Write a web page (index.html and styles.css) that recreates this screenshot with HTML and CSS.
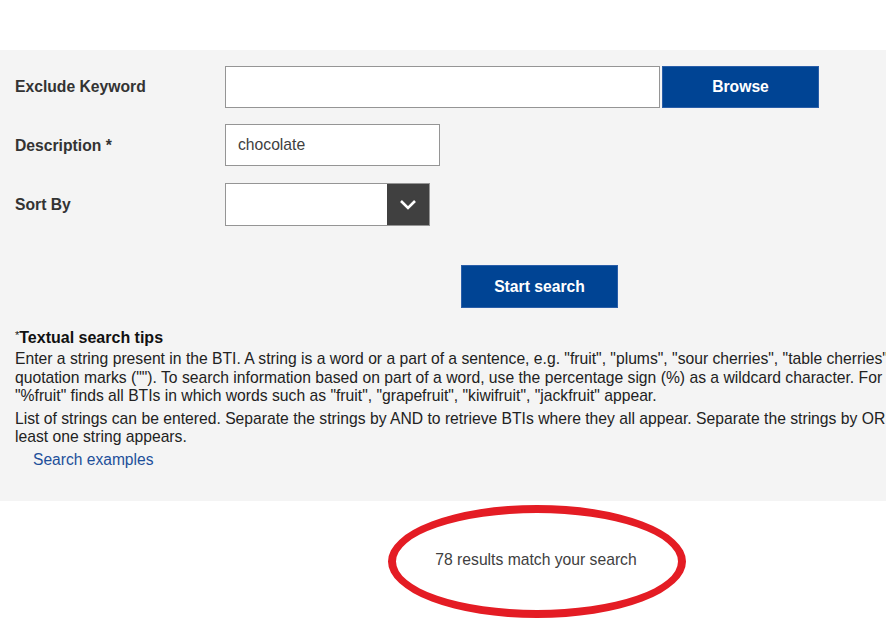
FILE: index.html
```html
<!DOCTYPE html>
<html>
<head>
<meta charset="utf-8">
<link rel="stylesheet" href="styles.css">
</head>
<body>
<div class="page">
  <div class="top-space"></div>
  <div class="panel">
    <div class="form-row">
      <label class="label">Exclude Keyword</label>
      <div class="field-group">
        <div class="input input-wide"></div>
        <button class="btn btn-browse">Browse</button>
      </div>
    </div>
    <div class="form-row">
      <label class="label">Description *</label>
      <div class="input input-desc">chocolate</div>
    </div>
    <div class="form-row">
      <label class="label">Sort By</label>
      <div class="select">
        <div class="select-value"></div>
        <div class="select-arrow">
          <svg width="18" height="12" viewBox="0 0 18 12"><path d="M2 2 L9 9 L16 2" fill="none" stroke="#fff" stroke-width="2.6"/></svg>
        </div>
      </div>
    </div>
    <div class="actions">
      <button class="btn btn-search">Start search</button>
    </div>
    <div class="tips">
      <h3 class="tips-title"><span class="star">*</span>Textual search tips</h3>
      <p class="tips-text">Enter a string present in the BTI. A string is a word or a part of a sentence, e.g. "fruit", "plums", "sour cherries", "table cherries" without quotation marks (""). To search information based on part of a word, use the percentage sign (%) as a wildcard character. For example, "%fruit" finds all BTIs in which words such as "fruit", "grapefruit", "kiwifruit", "jackfruit" appear.</p>
      <p class="tips-text tips-text-wide">List of strings can be entered. Separate the strings by AND to retrieve BTIs where they all appear. Separate the strings by OR to retrieve BTIs where at least one string appears.</p>
      <a class="tips-link" href="#">Search examples</a>
    </div>
  </div>
  <div class="results">78 results match your search</div>
  <div class="highlight"></div>
</div>
</body>
</html>
```
FILE: styles.css
```css
html {
  overflow: hidden;
}
html, body {
  margin: 0;
  padding: 0;
  background: #fff;
}
body {
  font-family: "Liberation Sans", Arial, sans-serif;
  color: #333;
}
.page {
  position: relative;
  width: 1072px;
  height: 641px;
  overflow: hidden;
}
.top-space {
  height: 50px;
}
.panel {
  background: #f4f4f4;
  height: 451px;
  box-sizing: border-box;
  padding: 16px 0 0 15px;
}
.form-row {
  display: grid;
  grid-template-columns: 210px auto;
  align-items: center;
  margin-bottom: 16px;
}
.label {
  font-size: 15.7px;
  font-weight: bold;
  color: #333;
}
.field-group {
  display: flex;
  gap: 2px;
}
.input {
  box-sizing: border-box;
  height: 42px;
  background: #fff;
  border: 1px solid #959595;
  font-size: 15.7px;
  color: #404040;
  padding-left: 12px;
  display: flex;
  align-items: center;
}
.input-wide {
  width: 435px;
}
.input-desc {
  width: 215px;
  margin-bottom: 1px;
}
.btn {
  font-family: "Liberation Sans", Arial, sans-serif;
  background: #004494;
  color: #fff;
  font-weight: bold;
  font-size: 15.7px;
  border: 1px solid #2a5ea8;
  height: 43px;
  width: 157px;
  padding: 0;
}
.btn-browse {
  height: 42px;
}
.select {
  display: flex;
  width: 205px;
  height: 43px;
  box-sizing: border-box;
  border: 1px solid #959595;
  background: #fff;
}
.select-value {
  flex: 1;
}
.select-arrow {
  width: 42px;
  background: #404040;
  display: flex;
  align-items: center;
  justify-content: center;
}
.actions {
  padding-left: 446px;
  margin-top: 39px;
}
.tips {
  margin-top: 21px;
}
.tips-title {
  margin: 0 0 3px;
  font-size: 16px;
  font-weight: bold;
  color: #111;
}
.star {
  font-size: 11px;
  vertical-align: 4px;
  font-weight: normal;
}
.tips-text {
  width: 960px;
  margin: 0 0 4px;
  font-size: 15.7px;
  line-height: 18.5px;
  color: #222;
}
.tips-text-wide {
  width: 1060px;
}
.tips-link {
  display: inline-block;
  margin-left: 18px;
  font-size: 15.6px;
  color: #1d4f9a;
  text-decoration: none;
}
.results {
  text-align: center;
  font-size: 15.7px;
  color: #404040;
  margin-top: 50px;
}
.highlight {
  position: absolute;
  left: 388px;
  top: 505px;
  width: 298px;
  height: 113px;
  box-sizing: border-box;
  border: 8px solid #e41c24;
  border-radius: 50%;
}
```
